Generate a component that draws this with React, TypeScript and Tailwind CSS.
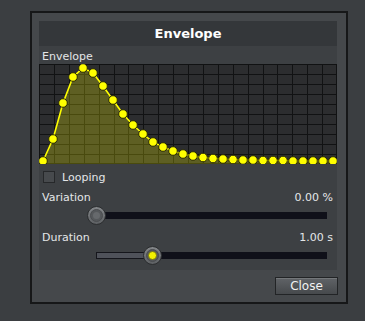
import React from "react";

const FONT = { fontFamily: '"DejaVu Sans", Verdana, sans-serif' };

// envelope points, y in graph px (graph is 298x100)
const ys = [
  97, 75, 39, 13, 4, 9, 22, 36, 50, 61, 70, 78, 83, 87, 90, 92, 93.5, 94.5, 95, 95.5,
  96, 96, 96.5, 96.5, 96.5, 97, 97, 97, 97, 97,
];

const EnvelopeGraph: React.FC = () => {
  const pts = ys.map((y, i) => [4 + i * 10, y] as const);
  const line = pts.map(([x, y]) => `${x},${y}`).join(" ");
  const area = `${pts[0][0]},100 ${line} ${pts[pts.length - 1][0]},100`;
  return (
    <svg width="298" height="100" viewBox="0 0 298 100" className="block">
      <rect x="0" y="0" width="298" height="100" fill="#2c2d2f" />
      {Array.from({ length: 21 }).map((_, i) => {
        const x = Math.min(297, Math.round(i * 14.9)) + 0.5;
        return <line key={"v" + i} x1={x} y1="0" x2={x} y2="100" stroke="#111213" strokeWidth="1" />;
      })}
      {Array.from({ length: 11 }).map((_, i) => {
        const y = Math.min(99, i * 10) + 0.5;
        return <line key={"h" + i} x1="0" y1={y} x2="298" y2={y} stroke="#111213" strokeWidth="1" />;
      })}
      <polygon points={area} fill="#ffff00" fillOpacity="0.24" />
      <polyline points={line} fill="none" stroke="#ffff00" strokeWidth="1.6" />
      {pts.map(([x, y], i) => (
        <circle key={i} cx={x} cy={y} r="4.3" fill="#ffff00" stroke="#2a2a06" strokeWidth="1" />
      ))}
    </svg>
  );
};

const Knob: React.FC<{ lit?: boolean }> = ({ lit }) => (
  <svg width="19" height="19" viewBox="0 0 19 19" className="block">
    <defs>
      <linearGradient id={lit ? "kg1" : "kg0"} x1="0" y1="0" x2="0" y2="1">
        <stop offset="0" stopColor="#85888b" />
        <stop offset="1" stopColor="#5c5f62" />
      </linearGradient>
    </defs>
    <circle cx="9.5" cy="9.5" r="9" fill={`url(#${lit ? "kg1" : "kg0"})`} stroke="#2b2d2f" strokeWidth="1" />
    <circle cx="9.5" cy="9.5" r="6" fill="#55585b" stroke="#4a4c4f" strokeWidth="1" />
    {lit ? (
      <circle cx="9.5" cy="9.5" r="4" fill="#f2f200" stroke="#6b6a10" strokeWidth="0.8" />
    ) : (
      <circle cx="9.5" cy="9.5" r="3.5" fill="#66696c" />
    )}
  </svg>
);

const Slider: React.FC<{ fill: number; lit?: boolean }> = ({ fill, lit }) => (
  <div className="relative ml-[57px] w-[231px] h-[19px] flex items-center">
    <div className="relative w-full h-[7px] bg-[#0f1019]">
      {fill > 0 && (
        <div
          className="absolute left-0 top-0 h-full bg-[#4f525a] border border-[#15161c]"
          style={{ width: fill }}
        />
      )}
    </div>
    <div className="absolute top-0" style={{ left: fill - 9.5 }}>
      <Knob lit={lit} />
    </div>
  </div>
);

export default function App() {
  return (
    <div className="w-[365px] h-[321px] bg-[#3b3e41] pt-[11px] pl-[30px]" style={FONT}>
      <div className="w-[318px] h-[293px] border-2 border-[#161718] bg-[#45484b] pt-[8px] pl-[7px] pr-[9px]">
        {/* header */}
        <div className="h-[25px] bg-[#34373a] flex items-center justify-center text-white text-[13px] font-bold leading-none">
          Envelope
        </div>
        {/* body */}
        <div className="bg-[#3d4043] h-[224px] text-[#e4e6e8] text-[11px]">
          <div className="pt-[4px] pl-[3px] leading-[14px]">Envelope</div>
          <EnvelopeGraph />
          <div className="mt-[7px] h-[12px] flex items-center">
            <div className="ml-[4px] w-[12px] h-[12px] bg-[#474a4d] border border-[#26282a]" />
            <span className="ml-[7px] leading-[14px] pt-[1px]">Looping</span>
          </div>
          <div className="mt-[8px] flex justify-between pl-[3px] pr-[4px] leading-[14px]">
            <span>Variation</span>
            <span>0.00 %</span>
          </div>
          <div className="mt-[1px]">
            <Slider fill={0} />
          </div>
          <div className="mt-[6px] flex justify-between pl-[3px] pr-[4px] leading-[14px]">
            <span>Duration</span>
            <span>1.00 s</span>
          </div>
          <div className="mt-[1px]">
            <Slider fill={56} lit />
          </div>
        </div>
        {/* footer */}
        <div className="mt-[7px] flex justify-end -mr-[1px]">
          <button className="w-[63px] h-[18px] border border-[#222426] bg-gradient-to-b from-[#606367] to-[#46494c] text-[#f2f2f2] text-[12px] leading-none shadow-[inset_0_1px_0_#74777a]">
            Close
          </button>
        </div>
      </div>
    </div>
  );
}
